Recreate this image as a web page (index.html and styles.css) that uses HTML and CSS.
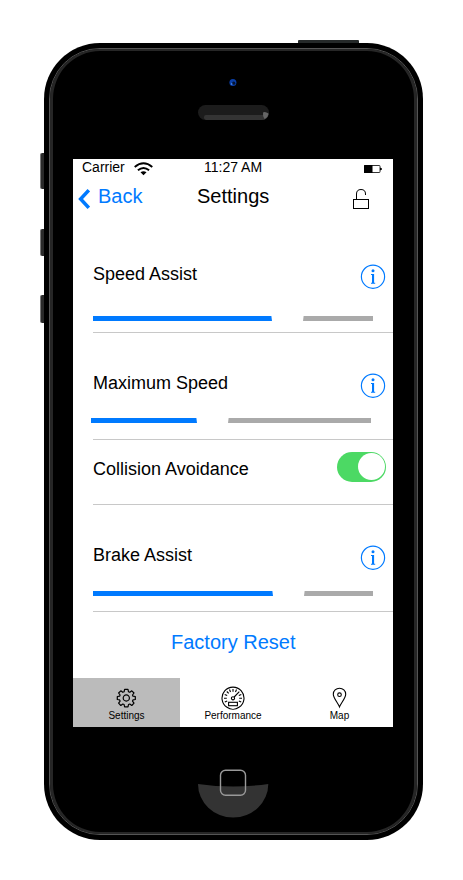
FILE: index.html
```html
<!DOCTYPE html>
<html lang="en">
<head>
<meta charset="utf-8">
<title>Settings</title>
<link rel="stylesheet" href="styles.css">
</head>
<body>
<div class="phone">
  <span class="key key-power"></span>
  <span class="key key-mute"></span>
  <span class="key key-up"></span>
  <span class="key key-down"></span>
  <div class="rim"><div class="face">
    <svg class="earpiece" width="71" height="42" viewBox="198 79 71 42">
      <circle cx="232.9" cy="82.6" r="3.5" fill="#0a3fa8"/>
      <circle cx="233.7" cy="83.2" r="1.6" fill="#06142f"/>
      <circle cx="231.7" cy="84" r=".8" fill="#5b9bff"/>
      <rect x="198" y="105" width="71" height="15" rx="7.5" fill="#1c1c1c"/>
      <path d="M206 115H266.500Q268.500 113 268.700 114Q267.500 120 261.500 120H206Q203.500 119 204 117Q204 115 206 115Z" fill="#343434"/>
      <path d="M263 112.500Q265 111 268.500 113.500Q268 117.500 264.500 119Q262.500 116 263 112.500Z" fill="#666"/>
    </svg>
    <main class="screen">
      <div class="status">
        <span class="carrier">Carrier</span>
        <svg class="wifi" width="20" height="14" viewBox="0 0 20 14" fill="none" stroke="#000" stroke-width="1.9">
          <path d="M.700 4.900Q9.500-2.200 18.300 4.900"/>
          <path d="M3.900 8.300Q9.500 3.500 15.100 8.300"/>
          <path d="M6.500 10.300Q9.500 8 12.500 10.300L9.500 13.200Z" fill="#000" stroke="none"/>
        </svg>
        <span class="time">11:27 AM</span>
        <svg class="battery" width="18" height="8" viewBox="0 0 18 8">
          <rect x=".5" y=".5" width="15.500" height="7" rx=".6" fill="none" stroke="#000" stroke-width=".8"/>
          <rect width="8.500" height="8" rx=".5"/>
          <path d="M16 2.500L18 3.500V4.500L16 5.500Z"/>
        </svg>
      </div>
      <header class="nav">
        <a class="back">
          <svg width="12" height="20" viewBox="0 0 12 20" fill="none" stroke="#007aff" stroke-width="3.500"><path d="M10.800 1.200L2.600 10L10.800 18.800"/></svg>
          <span>Back</span>
        </a>
        <h1>Settings</h1>
        <svg class="lock" width="18" height="22" viewBox="0 0 18 22" fill="none" stroke="#000" stroke-width="1">
          <rect x="1.500" y="11.500" width="15" height="9"/>
          <path d="M4.500 11V6Q4.500 1.500 9 1.500Q13.500 1.500 13.500 6V7"/>
        </svg>
      </header>
      <section class="row row-speed">
        <div class="head"><span>Speed Assist</span>
          <svg class="info" width="26" height="26" viewBox="0 0 26 26"><use href="#info"/></svg></div>
        <div class="slider"><i class="on"></i><i class="off"></i></div>
      </section>
      <section class="row row-max">
        <div class="head"><span>Maximum Speed</span>
          <svg class="info" width="26" height="26" viewBox="0 0 26 26"><use href="#info"/></svg></div>
        <div class="slider"><i class="on"></i><i class="off"></i></div>
      </section>
      <section class="row row-collision">
        <span>Collision Avoidance</span>
        <span class="toggle"><i></i></span>
      </section>
      <section class="row row-brake">
        <div class="head"><span>Brake Assist</span>
          <svg class="info" width="26" height="26" viewBox="0 0 26 26"><g id="info">
            <circle cx="13" cy="12.700" r="11.600" fill="none" stroke="#007aff" stroke-width="1.200"/>
            <circle cx="13" cy="6.800" r="1.500" fill="#007aff"/>
            <path d="M11 10H14.100V18.700H15.200V19.800H11V18.700H12V11H11Z" fill="#007aff"/>
          </g></svg></div>
        <div class="slider"><i class="on"></i><i class="off"></i></div>
      </section>
      <a class="reset">Factory Reset</a>
      <nav class="tabs">
        <a class="tab active">
          <svg width="24" height="24" viewBox="-11.300 -12 24 24" fill="none" stroke="#000" stroke-width="1.200" stroke-linejoin="round">
            <path d="M-1.700-8.700H1.700L2.200-6.200L3.500-5.700L5.500-7.200L7.700-5L6.200-3L6.700-1.800L9-1.500V1.500L6.700 1.900L6.200 3.100L7.700 5.200L5.500 7.500L3.500 6L2.200 6.500L1.700 8.900H-1.700L-2.200 6.500L-3.500 6L-5.500 7.500L-7.700 5.200L-6.200 3.100L-6.700 1.900L-9 1.500V-1.500L-6.700-1.800L-6.200-3L-7.700-5L-5.500-7.200L-3.500-5.700L-2.200-6.200Z"/>
            <circle r="3.100"/>
          </svg>
          <span>Settings</span>
        </a>
        <a class="tab">
          <svg width="24" height="24" viewBox="-12 -12 24 24" fill="none" stroke="#000" stroke-width="1.100">
            <path d="M-6 9.300A11 11 0 1 1 6 9.300A10 10 0 0 1-6 9.300Z"/>
            <path d="M-9 .300H-6.200M9 .300H6.200M-8.300-3.500L-5.800-2.500M8.300-3.500L5.800-2.500M-6.200-6.500L-4.300-4.600M-3.500-8.500L-2.500-6M0-9V-6.300M3.500-8.500L2.500-6M-8.200 4L-5.800 3M8.200 4L5.800 3M1.200-1L6.300-6.300"/>
            <circle cy=".300" r="1.600"/>
            <rect x="-4.400" y="4.300" width="8.800" height="3.400"/>
          </svg>
          <span>Performance</span>
        </a>
        <a class="tab">
          <svg width="24" height="24" viewBox="-11.500 -12 24 24" fill="none" stroke="#000" stroke-width="1.100">
            <path d="M0 8.900C-1.500 5-6.200 0-6.200-3.800A6.200 6 0 0 1 6.200-3.800C6.200 0 1.500 5 0 8.900Z"/>
            <circle cy="-3.300" r="1.800"/>
          </svg>
          <span>Map</span>
        </a>
      </nav>
    </main>
    <svg class="home" width="72" height="50" viewBox="197 769 72 50">
      <path d="M198 784Q233 789 268.300 784A35.150 33.600 0 0 1 198 784Z" fill="#333"/>
      <rect x="220.500" y="770.300" width="25" height="25" rx="5" fill="none" stroke="#999" stroke-width="1.400"/>
    </svg>
  </div></div>
</div>
</body>
</html>
```
FILE: styles.css
```css
* { box-sizing: border-box; }

body {
  margin: 0;
  padding: 43px 0 0 44px;
  height: 880px;
  overflow: hidden;
  background: #fff;
  color: #000;
  font-family: "Liberation Sans", Arial, sans-serif;
}

svg { display: block; flex: none; }

.phone {
  position: relative;
  width: 379px;
  height: 797px;
  padding: 5px;
  border-radius: 56px;
  background: #000;
}

.rim {
  height: 787px;
  border: 1px solid #555;
  border-radius: 51px;
}

.face {
  display: flex;
  flex-direction: column;
  height: 785px;
  border: 2px solid #262626;
  border-width: 2px 3px;
  border-radius: 50px;
  background: #000;
}

.key {
  position: absolute;
  left: -4px;
  width: 4px;
  background: #2a2a2a;
  border-left: 1px solid #777;
  border-radius: 2px 0 0 2px;
}

.key-power {
  left: 253.500px;
  top: -3px;
  width: 61.500px;
  height: 3px;
  border: 0;
  border-radius: 1px 1px 0 0;
  background: #252929;
}

.key-mute { top: 110px; height: 36px; }
.key-up { top: 186px; height: 27px; }
.key-down { top: 252px; height: 28px; }

.earpiece { margin: 28px 0 38px 145px; }

.home { margin: 42px 0 0 144px; }

.screen {
  display: flex;
  flex-direction: column;
  flex: none;
  width: 320px;
  height: 568px;
  margin-left: 20px;
  background: #fff;
}

.status {
  display: grid;
  grid-template-columns: 52px 70px 160px 18px;
  height: 18px;
  padding-left: 9px;
  font-size: 14px;
  line-height: 17px;
}

.wifi { margin-top: 3px; }

.battery { margin-top: 6px; }

.nav {
  display: grid;
  grid-template-columns: 119px 155px 18px;
  height: 38px;
  padding-left: 5px;
  font-size: 20px;
  line-height: 22px;
}

.back {
  display: flex;
  gap: 8px;
  padding-top: 8px;
  color: #007aff;
}

.back svg { margin-top: 4px; }

.back span, h1 { white-space: nowrap; }

h1 {
  margin: 0;
  padding-top: 8px;
  font: inherit;
}

.lock { margin-top: 11px; }

.row {
  height: 107px;
  margin-left: 20px;
  padding: 40px 7px 0 0;
  border-bottom: 1px solid #c8c8c8;
  font-size: 18px;
  line-height: 20px;
}

.row-speed { height: 118px; padding-top: 49px; }

.row-collision {
  display: flex;
  justify-content: space-between;
  height: 65px;
  padding-top: 12px;
}

.row-collision > span:first-child { padding-top: 7px; }

.head {
  display: flex;
  justify-content: space-between;
  height: 26px;
}

.slider {
  display: grid;
  grid-template-columns: 179px 70px;
  gap: 31px;
  height: 5px;
  margin-top: 26px;
}

.row-max .slider {
  grid-template-columns: 106px 143px;
  margin: 19px 0 0 -2px;
}

.row-brake .slider {
  grid-template-columns: 180px 69px;
  margin-top: 20px;
}

.on {
  background: #007aff;
  clip-path: polygon(0 0, calc(100% - .6px) 0, 100% 100%, 0 100%);
}

.off {
  background: #aaa;
  clip-path: polygon(.6px 0, 100% 0, 100% 100%, 0 100%);
}

.toggle {
  width: 49px;
  height: 30px;
  padding: 1px 1px 1px 21px;
  border-radius: 15px;
  background: #4cd964;
}

.toggle i {
  display: block;
  width: 27px;
  height: 27px;
  border-radius: 50%;
  background: #fff;
}

.reset {
  height: 66px;
  padding: 19px 0 0 98px;
  color: #007aff;
  font-size: 20px;
  line-height: 23px;
}

.tabs {
  display: grid;
  grid-template-columns: 107px 106px 107px;
  height: 49px;
}

.tab {
  display: flex;
  flex-direction: column;
  align-items: center;
  padding-top: 8px;
  font-size: 10px;
  line-height: 12px;
}

.active { background: #bbb; }
```
